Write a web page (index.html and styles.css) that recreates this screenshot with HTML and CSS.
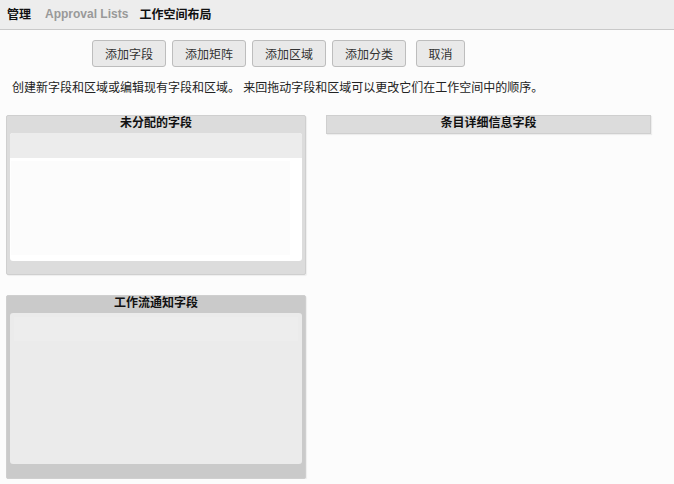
FILE: index.html
```html
<!DOCTYPE html>
<html lang="zh-CN">
<head>
  <meta charset="UTF-8" />
  <title>工作空间布局</title>
  <link rel="stylesheet" href="styles.css">
</head>
<body>
  <header class="topbar">
    <a href="#" class="crumb">管理</a>
    <a href="#" class="crumb muted">Approval Lists</a>
    <span class="crumb current">工作空间布局</span>
  </header>

  <div class="toolbar">
    <button class="btn">添加字段</button>
    <button class="btn">添加矩阵</button>
    <button class="btn">添加区域</button>
    <button class="btn">添加分类</button>
    <button class="btn btn-cancel">取消</button>
  </div>

  <p class="hint">创建新字段和区域或编辑现有字段和区域。 来回拖动字段和区域可以更改它们在工作空间中的顺序。</p>

  <div class="layout">
    <div class="col-left">
      <section class="panel panel-unassigned">
        <div class="panel-title">未分配的字段</div>
        <div class="panel-body">
          <div class="strip"></div>
          <div class="drop"></div>
        </div>
      </section>

      <section class="panel panel-workflow">
        <div class="panel-title">工作流通知字段</div>
        <div class="panel-body">
          <div class="strip"></div>
        </div>
      </section>
    </div>

    <div class="col-right">
      <section class="panel panel-detail">
        <div class="panel-title">条目详细信息字段</div>
      </section>
    </div>
  </div>
</body>
</html>
```

FILE: styles.css
```css
* {
  margin: 0;
  padding: 0;
  box-sizing: border-box;
}

body {
  font-family: "Liberation Sans", Arial, "Noto Sans CJK SC", sans-serif;
  font-size: 12px;
  background: #fcfcfc;
  color: #333;
}

.topbar {
  height: 30px;
  background: #ededed;
  border-bottom: 1px solid #c9c9c9;
  display: flex;
  align-items: center;
  padding-left: 7px;
  padding-bottom: 2px;
  gap: 14px;
}

.crumb {
  font-weight: bold;
  font-size: 12px;
  color: #111;
  text-decoration: none;
}

.crumb.muted {
  color: #999;
}

.crumb.current {
  margin-left: -3px;
}

.toolbar {
  display: flex;
  gap: 6px;
  padding-left: 92px;
  margin-top: 10px;
}

.btn {
  width: 74px;
  height: 27px;
  font-family: inherit;
  font-size: 12px;
  color: #333;
  background: #e9e9e9;
  border: 1px solid #bdbdbd;
  border-radius: 3px;
  cursor: pointer;
}

.btn-cancel {
  width: 49px;
  margin-left: 4px;
}

.hint {
  margin: 13px 0 0 12px;
  line-height: 16px;
  color: #222;
}

.layout {
  display: flex;
  gap: 20px;
  padding-left: 6px;
  margin-top: 19px;
}

.col-left {
  width: 300px;
  display: flex;
  flex-direction: column;
  gap: 20px;
}

.col-right {
  width: 325px;
}

.panel {
  background: #dcdcdc;
  border: 1px solid #cfcfcf;
  border-radius: 2px;
  box-shadow: 1px 1px 1px rgba(0, 0, 0, 0.06);
}

.panel-title {
  height: 17px;
  line-height: 15px;
  text-align: center;
  font-weight: bold;
  color: #111;
}

.panel-body {
  margin: 0 3px;
  border-radius: 3px;
}

.panel-unassigned {
  height: 160px;
}

.panel-unassigned .panel-body {
  height: 128px;
  background: #fff;
}

.panel-unassigned .strip {
  height: 25px;
  background: #ececec;
  border-radius: 3px 3px 0 0;
}

.panel-unassigned .drop {
  margin: 3px 12px 0 1px;
  height: 94px;
  background: #fcfcfc;
}

.panel-workflow {
  height: 184px;
  background: #cacaca;
}

.panel-workflow .panel-body {
  height: 151px;
  background: #ebebeb;
  padding: 4px 4px 0;
}

.panel-workflow .strip {
  height: 24px;
  background: #ededed;
}

.panel-detail {
  height: 19px;
  border-radius: 0;
}
```
